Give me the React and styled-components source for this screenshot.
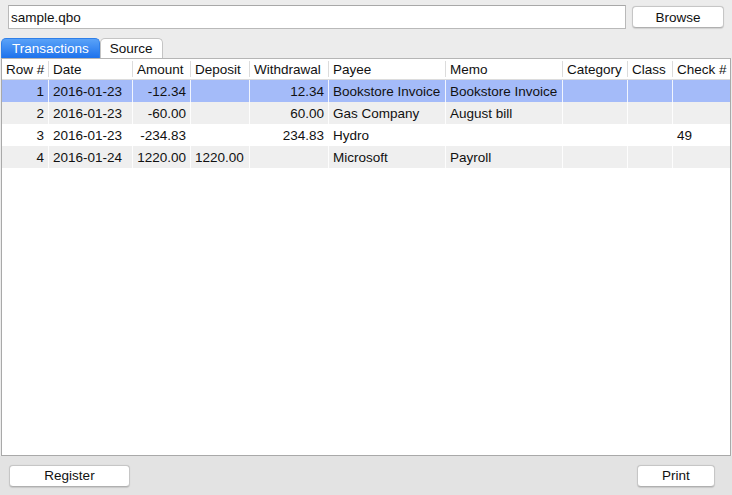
import { createGlobalStyle, styled } from "styled-components"

const GlobalStyle = createGlobalStyle`
  html, body {
    margin: 0;
    padding: 0;
    background: #ececec;
  }
  body {
    font-family: "Liberation Sans", Arial, sans-serif;
    font-size: 13.5px;
    color: #111;
  }
`

const columns = [
  { key: "row", title: "Row #", width: 47, align: "right" },
  { key: "date", title: "Date", width: 84 },
  { key: "amount", title: "Amount", width: 58, align: "right" },
  { key: "deposit", title: "Deposit", width: 59 },
  { key: "withdrawal", title: "Withdrawal", width: 79, align: "right" },
  { key: "payee", title: "Payee", width: 117 },
  { key: "memo", title: "Memo", width: 117 },
  { key: "category", title: "Category", width: 65 },
  { key: "cls", title: "Class", width: 45 },
  { key: "check", title: "Check #", width: 58 },
]

const transactions = [
  { row: "1", date: "2016-01-23", amount: "-12.34", withdrawal: "12.34", payee: "Bookstore Invoice", memo: "Bookstore Invoice" },
  { row: "2", date: "2016-01-23", amount: "-60.00", withdrawal: "60.00", payee: "Gas Company", memo: "August bill" },
  { row: "3", date: "2016-01-23", amount: "-234.83", withdrawal: "234.83", payee: "Hydro", check: "49" },
  { row: "4", date: "2016-01-24", amount: "1220.00", deposit: "1220.00", payee: "Microsoft", memo: "Payroll" },
]

const gridTemplate = columns.map((c) => `${c.width}px`).join(" ")

export default function App() {
  return (
    <Window>
      <GlobalStyle />
      <TopBar>
        <FileInput defaultValue="sample.qbo" />
        <PushButton $width={92}>Browse</PushButton>
      </TopBar>
      <Tabs>
        <Tab $active>Transactions</Tab>
        <Tab>Source</Tab>
      </Tabs>
      <Panel>
        <HeaderRow>
          {columns.map((c) => (
            <HeaderCell key={c.key}>{c.title}</HeaderCell>
          ))}
        </HeaderRow>
        {transactions.map((t, i) => (
          <Row key={t.row} $selected={i === 0} $striped={i % 2 === 1}>
            {columns.map((c) => (
              <Cell key={c.key} $align={c.align}>
                {t[c.key] || ""}
              </Cell>
            ))}
          </Row>
        ))}
      </Panel>
      <Footer>
        <PushButton $width={121}>Register</PushButton>
        <PushButton $width={78}>Print</PushButton>
      </Footer>
    </Window>
  )
}

const Window = styled.div`
  width: 732px;
  height: 495px;
  display: flex;
  flex-direction: column;
  background: #ececec;
  overflow: hidden;
`

const TopBar = styled.div`
  display: flex;
  align-items: center;
  gap: 6px;
  padding: 5px 8px 0 8px;
`

const FileInput = styled.input`
  flex: 1;
  height: 24px;
  box-sizing: border-box;
  border: 1px solid #b9b9b9;
  border-top-color: #a8a8a8;
  background: #fff;
  padding: 0 2px;
  font-family: "Liberation Sans", Arial, sans-serif;
  font-size: 13.5px;
  color: #111;
  outline: none;
`

const PushButton = styled.button`
  width: ${(p) => p.$width}px;
  height: 22px;
  box-sizing: border-box;
  border: 1px solid #c6c6c6;
  border-bottom-color: #b0b0b0;
  border-radius: 4px;
  background: #fff;
  box-shadow: 0 0.5px 1px rgba(0, 0, 0, 0.12);
  font-family: "Liberation Sans", Arial, sans-serif;
  font-size: 13.5px;
  color: #111;
  padding: 0;
`

const Tabs = styled.div`
  display: flex;
  align-items: flex-end;
  margin-top: 9px;
  padding-left: 1px;
  height: 20px;
`

const Tab = styled.div`
  height: 20px;
  box-sizing: border-box;
  padding: 0 ${(p) => (p.$active ? 10 : 9)}px;
  display: flex;
  align-items: center;
  border-radius: 5px 5px 0 0;
  border: 1px solid ${(p) => (p.$active ? "#2f7fe8" : "#c4c4c4")};
  border-bottom: none;
  background: ${(p) =>
    p.$active ? "linear-gradient(#5aa2f8, #1d72ec)" : "#fff"};
  color: ${(p) => (p.$active ? "#fff" : "#111")};
`

const Panel = styled.div`
  flex: 1;
  margin: 0 1px;
  background: #fff;
  border: 1px solid #a9a9a9;
  border-top-color: #b5b5b5;
  display: flex;
  flex-direction: column;
  overflow: hidden;
`

const HeaderRow = styled.div`
  display: grid;
  grid-template-columns: ${gridTemplate};
  height: 20px;
  border-bottom: 1px solid #dcdcdc;
  background: #fff;
`

const HeaderCell = styled.div`
  display: flex;
  align-items: center;
  padding: 0 4px;
  border-right: 1px solid #dcdcdc;
  margin: 2px 0;
  white-space: nowrap;
  overflow: hidden;
  &:last-child {
    border-right: none;
  }
`

const Row = styled.div`
  display: grid;
  grid-template-columns: ${gridTemplate};
  height: 22px;
  background: ${(p) =>
    p.$selected ? "#a4bbf9" : p.$striped ? "#efefef" : "#fff"};
`

const Cell = styled.div`
  display: flex;
  align-items: center;
  justify-content: ${(p) => (p.$align === "right" ? "flex-end" : "flex-start")};
  padding: 0 4px;
  border-right: 1px solid rgba(255, 255, 255, 0.85);
  white-space: nowrap;
  overflow: hidden;
  &:last-child {
    border-right: none;
  }
`

const Footer = styled.div`
  height: 39px;
  display: flex;
  align-items: center;
  justify-content: space-between;
  padding: 0 17px 0 9px;
  background: #e3e3e3;
`
